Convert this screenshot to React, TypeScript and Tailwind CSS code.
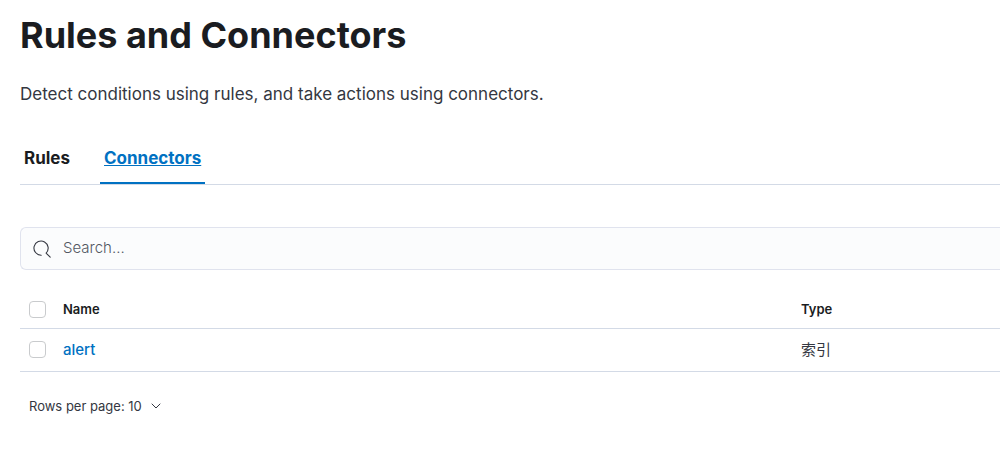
import { useState } from "react";

const tabs = ["Rules", "Connectors"];

const connectors = [{ name: "alert", type: "索引" }];

const checkboxClass =
  "block size-[17px] appearance-none rounded-[4px] border border-[#c9cbcd] bg-white checked:border-[#0071c2] checked:bg-[#0071c2]";

export default function App() {
  const [active, setActive] = useState("Connectors");

  return (
    <main className="pl-5 font-['Inter','Noto_Sans_CJK_SC',sans-serif] text-[#343741]">

      {/* HEADER */}
      <h1 className="pt-3 text-[36px] leading-[46px] font-bold text-[#1a1c21]">
        Rules and Connectors
      </h1>
      <p className="mt-[22px] text-[17px] leading-7">
        Detect conditions using rules, and take actions using connectors.
      </p>

      {/* TABS */}
      <div role="tablist" className="mt-6 flex gap-[26px] border-b border-[#d3dae6]">
        {tabs.map((tab) => (
          <button
            key={tab}
            role="tab"
            aria-selected={tab === active}
            onClick={() => setActive(tab)}
            className={
              tab === active
                ? "border-b-2 border-[#0071c2] px-1 pt-3 pb-[10px] text-[17px] leading-7 font-bold text-[#0071c2] underline"
                : "border-b-2 border-transparent px-1 pt-3 pb-[10px] text-[17px] leading-7 font-bold text-[#1a1c21]"
            }
          >
            {tab}
          </button>
        ))}
      </div>

      {/* SEARCH */}
      <label className="mt-[42px] flex h-[43px] items-center gap-3 rounded-l-md border border-r-0 border-[#e0e3ee] bg-[#fbfcfd] pl-3">
        <svg className="size-[18px]" viewBox="0 0 18 18" fill="none" stroke="currentColor" strokeWidth="1.1" strokeLinecap="round" aria-hidden="true">
          <path d="M8.2 15.2A7.1 7.1 0 1 1 13.1 13.1L17.2 17.2" strokeLinejoin="round" />
        </svg>
        <input
          type="text"
          aria-label="Search"
          placeholder="Search..."
          className="min-w-0 flex-1 bg-transparent text-[15px] font-light outline-none placeholder:text-[#525862]"
        />
      </label>

      {/* TABLE */}
      <table className="mt-[21px] w-full table-fixed border-collapse text-left">
        <thead>
          <tr className="border-b border-[#d3dae6] text-[13px] leading-5 text-[#1a1c21]">
            <th className="h-[37px] w-[43px] pl-[9px]">
              <input type="checkbox" aria-label="Select all rows" className={checkboxClass} />
            </th>
            <th className="font-semibold">Name</th>
            <th className="w-[199px] font-semibold">Type</th>
          </tr>
        </thead>
        <tbody>
          {connectors.map((item) => (
            <tr key={item.name} className="border-b border-[#d3dae6] text-[15px] leading-6">
              <td className="h-[43px] pl-[9px]">
                <input type="checkbox" aria-label={`Select ${item.name}`} className={checkboxClass} />
              </td>
              <td>
                <a href="#alert" className="font-medium text-[#0071c2]">{item.name}</a>
              </td>
              <td>{item.type}</td>
            </tr>
          ))}
        </tbody>
      </table>

      {/* PAGINATION */}
      <button className="mt-6 flex items-center gap-2 pl-[9px] text-[13px] leading-5">
        Rows per page: 10
        <svg className="size-3" viewBox="0 0 12 12" fill="none" stroke="currentColor" aria-hidden="true">
          <path d="M2 4l4 4 4-4" strokeLinecap="round" strokeLinejoin="round" />
        </svg>
      </button>

    </main>
  );
}
